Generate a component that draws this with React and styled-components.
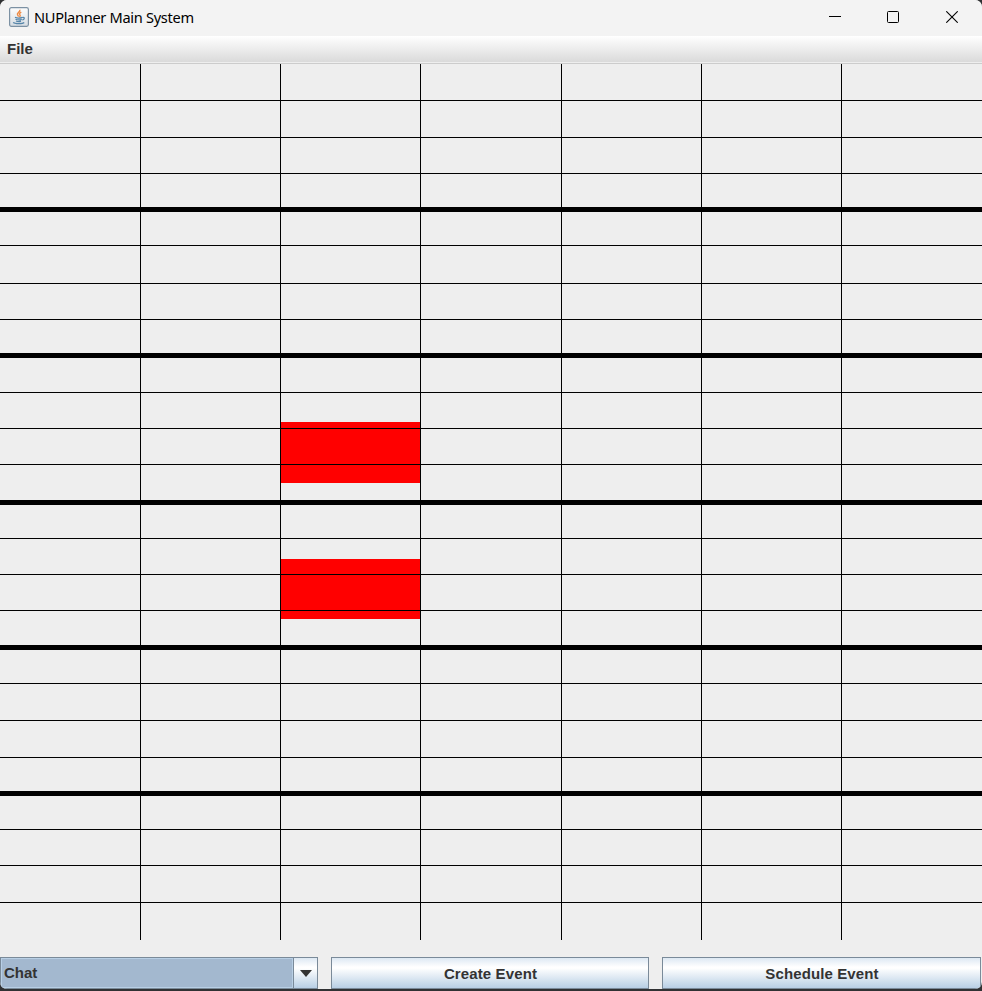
import React from "react";
import styled, { createGlobalStyle } from "styled-components";

const GlobalStyle = createGlobalStyle`
  * { box-sizing: border-box; }
  body { margin: 0; background: #303133; overflow: hidden; }
`;

const Window = styled.div`
  display: flex;
  flex-direction: column;
  width: 982px;
  height: 989px;
  overflow: hidden;
  border-radius: 7px;
  background: #eeeeee;
  color: #333333;
  font: bold 15px "Liberation Sans", Arial, sans-serif;
`;

const TitleBar = styled.header`
  display: flex;
  align-items: center;
  flex: 0 0 36px;
  padding-left: 9px;
  background: #f3f3f3;
`;

const JavaIcon = styled.svg`
  width: 20px;
  height: 20px;
  margin-bottom: 3px;
`;

const Title = styled.h1`
  margin: 0 auto 2px 5px;
  color: #000;
  font: 400 14.6px/20px "Noto Sans", sans-serif;
  letter-spacing: -0.31px;
  white-space: nowrap;
`;

const WindowControl = styled.button`
  display: flex;
  align-items: center;
  justify-content: center;
  width: ${(p) => p.$width || 58}px;
  height: 34px;
  margin-bottom: 2px;
  padding: 0;
  border: 0;
  background: transparent;
`;

const MenuBar = styled.nav`
  display: flex;
  flex: 0 0 28px;
  padding: 4px 7px 0;
  border-bottom: 1px solid #cccccc;
  background: linear-gradient(#ffffff, #dadada 26px, #eeeeee 26px);
  line-height: 18px;
`;

const Calendar = styled.main`
  position: relative;
  flex: 0 0 876px;
`;

const Lines = styled.div`
  position: relative;
  display: flex;
  flex-direction: column;
`;

const HourRow = styled.div`
  display: grid;
  grid-template-columns: 141px 140px 140px 141px 140px 140px 140px;
  flex: 0 0 ${(p) => p.$height}px;
  border-bottom: ${(p) => p.$line}px solid #000;
`;

const DayCell = styled.div`
  border-right: 1px solid #000;
  &:last-child { border-right: 0; }
`;

const EventBlock = styled.div`
  position: absolute;
  left: 281px;
  top: ${(p) => p.$top}px;
  width: 139px;
  height: ${(p) => p.$height}px;
  background: #ff0000;
`;

const Footer = styled.footer`
  display: grid;
  grid-template-columns: 318px 318px 319px;
  column-gap: 13px;
  height: 32px;
  margin-top: 17px;
`;

const metal = "linear-gradient(#dde8f3 0%, #ffffff 30%, #ffffff 34%, #b8cfe5 100%)";

const ActionButton = styled.button`
  height: 32px;
  padding: 1px 0 0 1px;
  border: 1px solid #7a8a99;
  background: ${metal};
  color: #333333;
  font: inherit;
  letter-spacing: 0.12px;
`;

const Select = styled.div`
  display: flex;
  height: 32px;
  border: 1px solid #7a8a99;
`;

const SelectValue = styled.div`
  flex: 1;
  padding-left: 2px;
  border: 1px solid #b8cfe5;
  background: #a3b8cf;
  line-height: 28px;
`;

const SelectArrow = styled.div`
  display: flex;
  align-items: center;
  justify-content: center;
  width: 24px;
  border-left: 1px solid #7a8a99;
  background: ${metal};
`;

const rowHeights = [
  37, 37, 36, 38, 34, 38, 36, 38, 35, 36, 36, 40,
  34, 36, 36, 39, 34, 37, 37, 38, 34, 36, 37, 37,
];
const days = [0, 1, 2, 3, 4, 5, 6];
const events = [
  { top: 358, height: 61 },
  { top: 495, height: 60 },
];

function lineWidth(hour) {
  if (hour === 23) return 0;
  return hour % 4 === 3 ? 5 : 1;
}

export default function App() {
  return (
    <>
      <GlobalStyle />
      <Window>
        <TitleBar>
          <JavaIcon viewBox="0 0 20 20" fill="none">
            <defs>
              <linearGradient id="tile" x2="0" y2="1">
                <stop stopColor="#fdfdfd" />
                <stop offset="1" stopColor="#d6dde3" />
              </linearGradient>
            </defs>
            <rect x=".6" y=".6" width="18.8" height="18.8" rx="1.8" fill="url(#tile)" stroke="#7c91a3" strokeWidth="1.2" />
            <path d="M10.8 2.8c1 2.2-3.4 3-2.3 5 .3.7.9 1.1.8 1.8M12.3 5.2c-2 1-2.2 2-1.2 3 .5.7-.2 1.4-.7 1.8" stroke="#ee8b45" strokeWidth="1.4" />
            <path d="M6 10.3c1.6.8 5.5.7 7.3 0M6.5 12.3c1.7.8 4.6.7 6.3 0M7 14c1.6.7 3.7.6 5 .1M13.4 10.5c2.8-.7 2.2 2-.2 2.5M4.2 15.4c1.8 1.8 9.6 1.6 11 .1" stroke="#5685a9" strokeWidth="1.25" />
          </JavaIcon>
          <Title>NUPlanner Main System</Title>
          <WindowControl aria-label="Minimize">
            <svg width="12" height="12"><path d="M0 5.5h12" stroke="#000" /></svg>
          </WindowControl>
          <WindowControl aria-label="Maximize">
            <svg width="12" height="12" fill="none"><rect x=".5" y=".5" width="11" height="11" rx="1" stroke="#000" /></svg>
          </WindowControl>
          <WindowControl aria-label="Close" $width={60}>
            <svg width="12" height="12"><path d="M.3.3l11.4 11.4M11.7.3.3 11.7" stroke="#000" strokeWidth="1.1" /></svg>
          </WindowControl>
        </TitleBar>
        <MenuBar>File</MenuBar>
        <Calendar>
          {events.map((e) => (
            <EventBlock key={e.top} $top={e.top} $height={e.height} />
          ))}
          <Lines>
            {rowHeights.map((height, hour) => (
              <HourRow key={hour} $height={height} $line={lineWidth(hour)}>
                {days.map((day) => <DayCell key={day} />)}
              </HourRow>
            ))}
          </Lines>
        </Calendar>
        <Footer>
          <Select>
            <SelectValue>Chat</SelectValue>
            <SelectArrow>
              <svg width="12" height="7"><path d="M0 0h12L6 7z" fill="#333" /></svg>
            </SelectArrow>
          </Select>
          <ActionButton>Create Event</ActionButton>
          <ActionButton>Schedule Event</ActionButton>
        </Footer>
      </Window>
    </>
  );
}
